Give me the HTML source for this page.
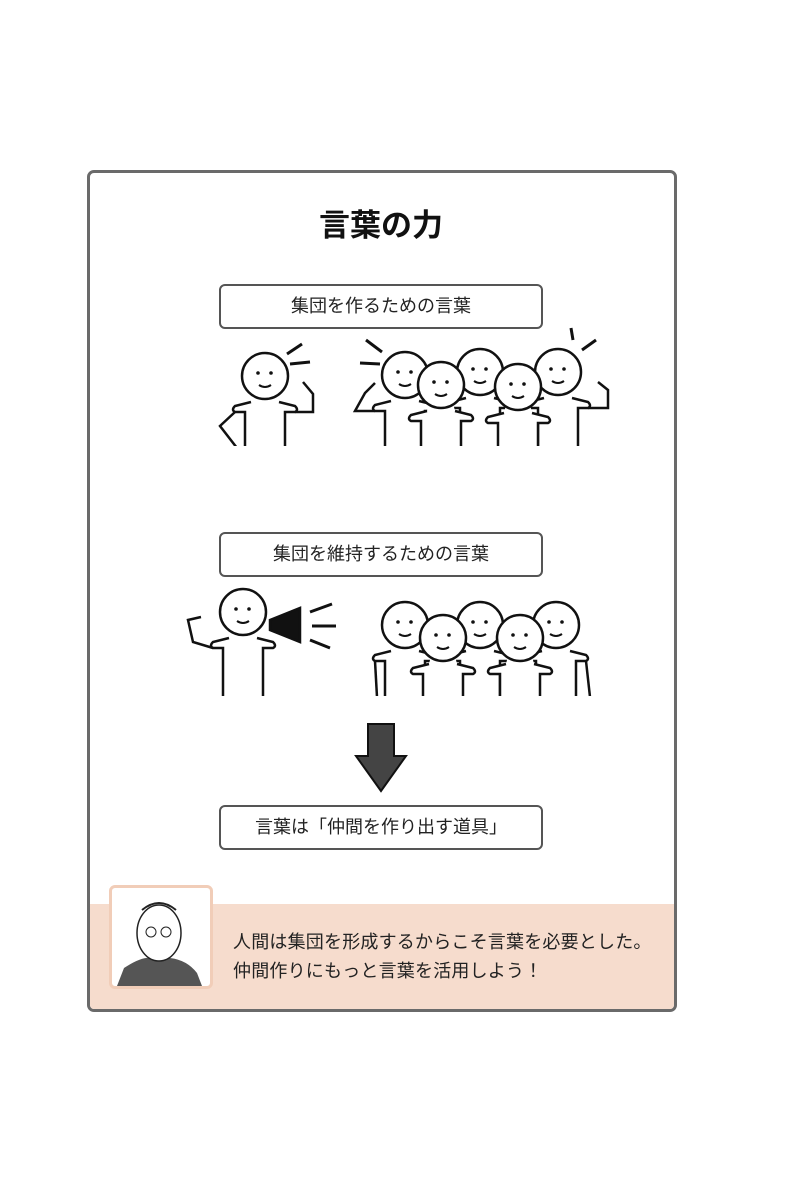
<!DOCTYPE html>
<html><head><meta charset="utf-8"><style>
body{margin:0;width:807px;height:1186px;background:#fff;position:relative;font-family:"Liberation Sans","Noto Sans CJK JP",sans-serif;overflow:hidden}
.frame{position:absolute;left:87px;top:170px;width:584px;height:836px;border:3px solid #6a6a6a;border-radius:7px;overflow:hidden;background:#fff}
.band{position:absolute;left:0;right:0;top:731px;bottom:0;background:#f6dccd}
.title{position:absolute;width:588px;top:200px;text-align:center;font-size:31px;font-weight:bold;color:#111}
.box{position:absolute;left:219px;width:320px;height:41px;border:2px solid #555;border-radius:6px;text-align:center;line-height:41px;font-size:18px;color:#222;background:#fff}
.por{position:absolute;left:109px;top:885px;width:98px;height:98px;border:3px solid #f1cdb8;border-radius:6px;background:#fff}
.txt{position:absolute;left:233px;top:928px;font-size:18px;line-height:29px;color:#222;letter-spacing:0.2px}
svg{position:absolute;left:0;top:0}
</style></head><body>
<div class="frame"><div class="band"></div></div>
<div class="title" style="left:87px">言葉の力</div>
<div class="box" style="top:284px">集団を作るための言葉</div>
<div class="box" style="top:532px">集団を維持するための言葉</div>
<div class="box" style="top:805px">言葉は「仲間を作り出す道具」</div>
<svg width="807" height="1186" fill="#fff" stroke="#111" stroke-width="2.5">
<defs>
<clipPath id="c1"><rect x="150" y="320" width="500" height="126"/></clipPath>
<clipPath id="c2"><rect x="150" y="580" width="500" height="116"/></clipPath>
<g id="f">
<path d="M-20,90 L-20,36 L-30,36 Q-34,34 -30,30 L-14,26 L-12,18 L12,18 L14,26 L30,30 Q34,34 30,36 L20,36 L20,90 Z" stroke="none"/>
<path d="M-20,90 L-20,36 L-30,36 Q-34,34 -30,30 L-14,26 M14,26 L30,30 Q34,34 30,36 L20,36 L20,90" fill="none"/>
<circle cx="0" cy="0" r="23"/>
<circle cx="-7" cy="-3" r="1.8" fill="#111" stroke="none"/><circle cx="6" cy="-3" r="1.8" fill="#111" stroke="none"/>
<path d="M-6,9 Q0,13 6,9" fill="none" stroke-width="2"/>
</g>
</defs>
<g clip-path="url(#c1)">
<g transform="translate(265,376)"><use href="#f"/><path d="M-30,36 L-45,50 L-28,72 M30,36 L48,36 L48,18 L38,6" fill="none"/></g>
<g transform="translate(405,375)"><use href="#f"/><path d="M-30,36 L-50,36 L-40,18 L-30,8" fill="none"/></g>
<g transform="translate(480,372)"><use href="#f"/></g>
<g transform="translate(558,372)"><use href="#f"/><path d="M30,36 L50,36 L50,18 L40,10" fill="none"/></g>
<g transform="translate(441,385)"><use href="#f"/></g>
<g transform="translate(518,387)"><use href="#f"/></g>
</g>
<path d="M287,354 L302,344 M290,364 L310,362 M366,340 L382,352 M360,363 L380,364 M573,340 L571,328 M582,350 L596,340" stroke-width="3"/>
<g clip-path="url(#c2)">
<g transform="translate(243,612)"><use href="#f"/><path d="M-30,36 L-50,30 L-55,8 L-42,5" fill="none"/></g>
<g transform="translate(405,625)"><use href="#f"/><path d="M-30,36 L-28,72" fill="none"/></g>
<g transform="translate(480,625)"><use href="#f"/></g>
<g transform="translate(556,625)"><use href="#f"/><path d="M30,36 L34,72" fill="none"/></g>
<g transform="translate(443,638)"><use href="#f"/></g>
<g transform="translate(520,638)"><use href="#f"/></g>
</g>
<path d="M270,620 L300,608 L300,642 L270,630 Z" fill="#111"/>
<path d="M310,612 L332,604 M312,626 L336,626 M310,640 L330,648" stroke-width="3"/>
<path d="M368,724 L394,724 L394,756 L406,756 L381,791 L356,756 L368,756 Z" fill="#444" stroke="#111" stroke-width="2"/>
</svg>
<div class="por"><svg width="98" height="98" viewBox="0 0 98 98"><path d="M5,98 L12,80 Q30,68 40,70 L58,70 Q75,72 85,85 L90,98 Z" fill="#555"/><ellipse cx="47" cy="45" rx="22" ry="28" fill="#fff" stroke="#222" stroke-width="1.5"/><circle cx="39" cy="44" r="5" fill="none" stroke="#222"/><circle cx="54" cy="44" r="5" fill="none" stroke="#222"/><path d="M30,22 Q47,8 64,22" fill="none" stroke="#222" stroke-width="2"/></svg></div>
<div class="txt">人間は集団を形成するからこそ言葉を必要とした。<br>仲間作りにもっと言葉を活用しよう！</div>
</body></html>
